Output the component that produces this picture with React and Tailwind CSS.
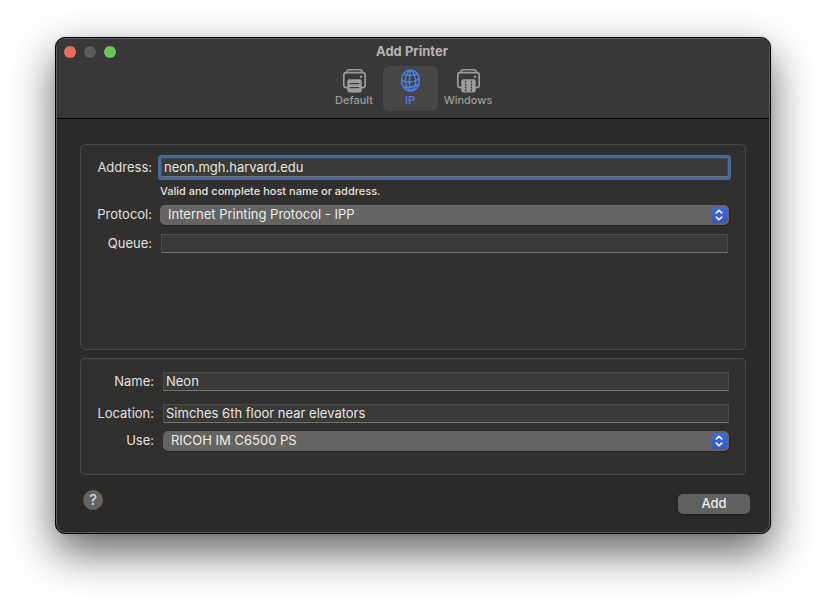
import React from 'react';

const PrinterIcon = ({ grid }) => (
    <svg viewBox="0 0 25 25" className="h-[25px] w-[25px]" fill="none" aria-hidden="true">
        <path d="M4.9 4.6V3.7c0-1.3.8-2 2.1-2h11c1.3 0 2.1.7 2.1 2v.9" stroke="currentColor" strokeWidth="1.5" />
        <path
            d="M6 19.6H4.4c-1.6 0-2.6-1-2.6-2.6V7.3c0-1.6 1-2.6 2.6-2.6h16.2c1.6 0 2.6 1 2.6 2.6V17c0 1.6-1 2.6-2.6 2.6H19"
            stroke="currentColor"
            strokeWidth="1.7"
        />
        <circle cx="19" cy="8.8" r="1.2" fill="currentColor" />
        <rect x="5.3" y="11.3" width="14.4" height="13.2" rx="2" fill="currentColor" />
        {grid ? (
            <path d="M9.6 12.8v10.4M15.4 12.8v10.4" stroke="#383838" strokeWidth="1.4" strokeDasharray="1.8 1.05" />
        ) : (
            <path d="M8.2 15.6h8.6M8.2 19.6h8.6" stroke="#383838" strokeWidth="1.2" strokeLinecap="round" />
        )}
    </svg>
);

const GlobeIcon = () => (
    <svg viewBox="0 0 25 25" className="h-[25px] w-[25px]" fill="none" stroke="currentColor" strokeWidth="1.3" aria-hidden="true">
        <ellipse cx="12.5" cy="12.5" rx="8.9" ry="10.5" strokeWidth="1.5" />
        <path d="M12.6 2.2C9 4.8 7.2 8.8 7.3 12.8c.1 4 1.6 7.4 4.2 9.9" />
        <path d="M12.8 2.2c-1.5 5.2-1.7 14.4-.4 20.6" />
        <path d="M13.2 2.2c3.3 3.7 4.9 9.3 4.4 13.2-.4 3-1.8 5.6-4 7.3" />
        <path d="M5.6 6c4.2 2 8.8 2.2 13.2-.4" />
        <path d="M3.6 12.4c5.4 2.3 12.4 1.8 17.6-1.6" />
        <path d="M5.2 18.6c4.6 1.4 10.7.8 15-2.4" />
    </svg>
);

const tabs = [
    { label: 'Default', icon: <PrinterIcon />, width: 'w-[51px]' },
    { label: 'IP', icon: <GlobeIcon />, width: 'w-[55px]', active: true },
    { label: 'Windows', icon: <PrinterIcon grid />, width: 'w-[55px]' }
];

const labelClass = 'self-center pb-[2px] text-right';
const inputClass =
    'h-[19px] w-full border border-[#4b4b49] border-b-[#757573] bg-[#3a3a38] px-[2px] pb-[2px] text-[13px] text-[#e6e6e4] outline-none';

const PopUpSelect = ({ id, options }) => (
    <div className="relative w-full">
        <select
            id={id}
            className="block h-5 w-full appearance-none rounded-[5px] bg-[#656462] pb-[2px] pl-2 pr-6 text-[13px] text-[#ececea] shadow-[0_1px_1px_rgba(0,0,0,0.3)] outline-none"
        >
            {options.map((option) => (
                <option key={option}>{option}</option>
            ))}
        </select>
        <span className="pointer-events-none absolute right-[2px] top-[2px] flex h-4 w-4 items-center justify-center rounded-[4px] bg-linear-to-b from-[#4169dc] to-[#3458c8]">
            <svg viewBox="0 0 16 16" className="h-4 w-4" fill="none" stroke="#fff" strokeWidth="1.6" strokeLinecap="round" strokeLinejoin="round">
                <path d="M5.2 6 8 3.2 10.8 6M5.2 10 8 12.8 10.8 10" />
            </svg>
        </span>
    </div>
);

const App = () => {
    return (
        <main className="bg-white px-[55px] pb-[73px] pt-[37px] font-['Inter','Liberation_Sans',sans-serif] text-[13px] leading-4 text-[#e2e2e0]">
            <div className="overflow-hidden rounded-[10px] border border-black bg-[#2b2a28] shadow-[0_18px_44px_rgba(0,0,0,0.62),0_0_3px_rgba(0,0,0,0.12)]">
                <div className="rounded-[9px] border border-[#5c5c5a]">
                    <header className="grid grid-cols-[1fr_auto_1fr] rounded-t-[8px] border-b border-black bg-[#383838] pb-[7px] pr-[2px] pt-1">
                        <div className="flex gap-2 pl-[7px] pt-[3px]">
                            <button type="button" aria-label="Close" className="h-3 w-3 rounded-full bg-[#ec6f5e]" />
                            <button type="button" aria-label="Minimize" className="h-3 w-3 rounded-full bg-[#5b5b5b]" />
                            <button type="button" aria-label="Zoom" className="h-3 w-3 rounded-full bg-[#68c557]" />
                        </div>
                        <div>
                            <h1 className="text-center font-bold text-[#b4b4b4]">Add Printer</h1>
                            <nav className="mt-[7px] flex justify-center gap-[3px]">
                                {tabs.map((tab) => (
                                    <button
                                        key={tab.label}
                                        type="button"
                                        className={`flex h-[45px] flex-col items-center rounded-[6px] pt-[2px] text-[11px] font-medium leading-[14px] ${tab.width} ${
                                            tab.active ? 'bg-[#464646] text-[#4b80f5]' : 'text-[#9d9d9d]'
                                        }`}
                                    >
                                        {tab.icon}
                                        {tab.label}
                                    </button>
                                ))}
                            </nav>
                        </div>
                    </header>

                    <form className="px-[23px] pt-[25px]" onSubmit={(e) => e.preventDefault()}>
                        <section className="grid min-h-[206px] grid-cols-[71px_1fr] content-start gap-x-2 rounded-[5px] border border-[#484745] bg-[#31302e] pb-4 pr-4 pt-[13px]">
                            <label htmlFor="address" className={labelClass}>Address:</label>
                            <div className="flex px-px">
                                <input
                                    id="address"
                                    type="text"
                                    defaultValue="neon.mgh.harvard.edu"
                                    aria-describedby="address-hint"
                                    className={`${inputClass} rounded-[1px] shadow-[0_0_0_3px_#486a99]`}
                                />
                            </div>
                            <p id="address-hint" className="col-start-2 py-[6px] text-[11px] font-medium">Valid and complete host name or address.</p>

                            <label htmlFor="protocol" className={labelClass}>Protocol:</label>
                            <PopUpSelect id="protocol" options={['Internet Printing Protocol - IPP']} />

                            <label htmlFor="queue" className={`mt-[9px] ${labelClass}`}>Queue:</label>
                            <div className="mt-[9px] flex px-px">
                                <input id="queue" type="text" className={inputClass} />
                            </div>
                        </section>

                        <section className="mt-2 grid grid-cols-[73px_1fr] gap-x-[9px] rounded-[5px] border border-[#484745] bg-[#31302e] pb-[23px] pr-4 pt-[13px]">
                            <label htmlFor="name" className={labelClass}>Name:</label>
                            <input id="name" type="text" defaultValue="Neon" className={inputClass} />

                            <label htmlFor="location" className={`mt-[13px] ${labelClass}`}>Location:</label>
                            <div className="mt-[13px] flex">
                                <input id="location" type="text" defaultValue="Simches 6th floor near elevators" className={inputClass} />
                            </div>

                            <label htmlFor="use" className={`mt-2 ${labelClass}`}>Use:</label>
                            <div className="mt-2 flex">
                                <PopUpSelect id="use" options={['RICOH IM C6500 PS']} />
                            </div>
                        </section>
                    </form>

                    <footer className="flex items-start justify-between pb-[18px] pl-[26px] pr-[19px] pt-[15px]">
                        <button type="button" aria-label="Help" className="h-5 w-5 rounded-full bg-[#636361] text-[15px] leading-5">
                            ?
                        </button>
                        <button
                            type="button"
                            className="mt-1 h-5 w-[72px] rounded-[5px] bg-[#60605e] pb-[2px] font-medium leading-[18px] text-[#ececea] shadow-[0_1px_1px_rgba(0,0,0,0.3)]"
                        >
                            Add
                        </button>
                    </footer>
                </div>
            </div>
        </main>
    );
};

export default App;
